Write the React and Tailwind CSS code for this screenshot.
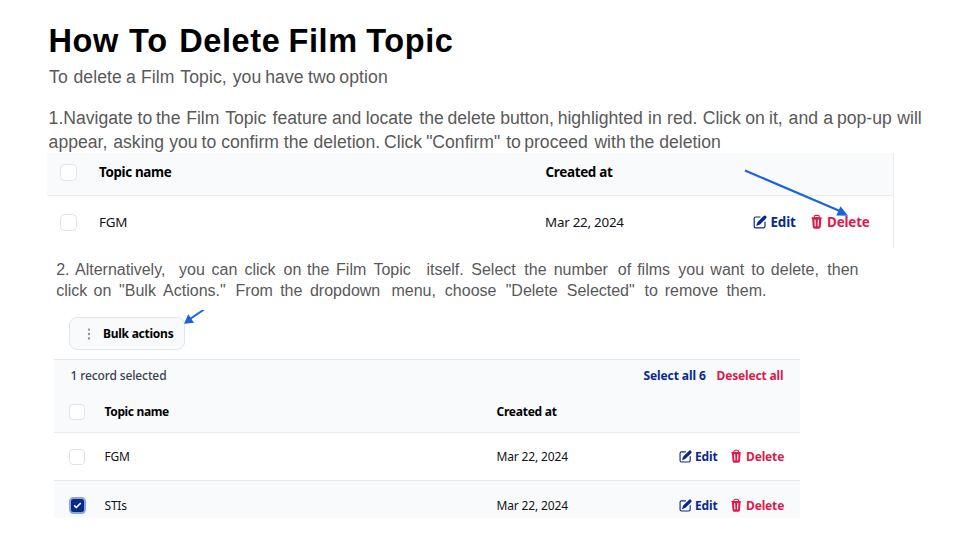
import { HiMiniPencilSquare, HiMiniTrash, HiMiniEllipsisVertical } from "react-icons/hi2";

const sans = "font-['Liberation_Sans',Arial,sans-serif]";
const ui = "font-['Noto_Sans',sans-serif]";

const title = [
  ["How", "w-[80.6px]"], ["To", "w-[50.1px]"], ["Delete", "w-[109.3px]"], ["Film", "w-[77.8px]"], ["Topic", ""],
];
const intro = [
  ["To", "w-[24.4px]"], ["delete", "w-[52.7px]"], ["a", "w-[14.9px]"], ["Film", "w-[39.3px]"], ["Topic,", "w-[52.4px]"],
  ["you", "w-[32.5px]"], ["have", "w-[42.8px]"], ["two", "w-[31.4px]"], ["option", ""],
];
const stepOne = [
  [
    ["1.Navigate", "w-[89px]"], ["to", "w-[18.4px]"], ["the", "w-[30.2px]"], ["Film", "w-[39px]"], ["Topic", "w-[47.4px]"],
    ["feature", "w-[59.4px]"], ["and", "w-[33.8px]"], ["locate", "w-[53.5px]"], ["the", "w-[28.3px]"], ["delete", "w-[52.6px]"],
    ["button,", "w-[57.5px]"], ["highlighted", "w-[90.4px]"], ["in", "w-[19px]"], ["red.", "w-[35.7px]"], ["Click", "w-[42.5px]"],
    ["on", "w-[23.8px]"], ["it,", "w-[19.6px]"], ["and", "w-[34.6px]"], ["a", "w-[13.8px]"], ["pop-up", "w-[60.3px]"], ["will", ""],
  ],
  [
    ["appear,", "w-[64.7px]"], ["asking", "w-[55.9px]"], ["you", "w-[32.4px]"], ["to", "w-[19.7px]"], ["confirm", "w-[62.6px]"],
    ["the", "w-[29.7px]"], ["deletion.", "w-[70.5px]"], ["Click", "w-[42.1px]"], ['"Confirm"', "w-[80px]"], ["to", "w-[18.1px]"],
    ["proceed", "w-[70.2px]"], ["with", "w-[35.4px]"], ["the", "w-[29.4px]"], ["deletion", ""],
  ],
];
const stepTwo = [
  [
    ["2.", "w-[18.8px]"], ["Alternatively,", "w-[104px]"], ["you", "w-[32.5px]"], ["can", "w-[33px]"], ["click", "w-[39px]"],
    ["on", "w-[23.6px]"], ["the", "w-[29px]"], ["Film", "w-[37.3px]"], ["Topic", "w-[53px]"], ["itself.", "w-[44.9px]"],
    ["Select", "w-[53.1px]"], ["the", "w-[29.3px]"], ["number", "w-[64.2px]"], ["of", "w-[19.3px]"], ["films", "w-[41.2px]"],
    ["you", "w-[32px]"], ["want", "w-[41px]"], ["to", "w-[19.5px]"], ["delete,", "w-[56.5px]"], ["then", ""],
  ],
  [
    ["click", "w-[37.4px]"], ["on", "w-[25.5px]"], ['"Bulk', "w-[44px]"], ['Actions."', "w-[72.5px]"], ["From", "w-[44.6px]"],
    ["the", "w-[29.8px]"], ["dropdown", "w-[81.5px]"], ["menu,", "w-[53.4px]"], ["choose", "w-[60.8px]"], ['"Delete', "w-[61.1px]"],
    ['Selected"', "w-[77.7px]"], ["to", "w-[20.3px]"], ["remove", "w-[61.7px]"], ["them.", ""],
  ],
];

function Line({ words }) {
  return (
    <span className="flex whitespace-nowrap">
      {words.map(([word, width], i) => (
        <span key={i} className={`shrink-0 ${width}`}>{word} </span>
      ))}
    </span>
  );
}

function Checkbox({ className }) {
  return <span className={`shrink-0 border border-[#e2e4e8] bg-white ${className}`} />;
}

function SmallRow({ name, checked, className }) {
  return (
    <div className={`flex items-center text-[12px] text-[#111318] ${className}`}>
      <div className="flex w-[50.5px] pl-[15px]">
        {checked ? (
          <span className="flex size-[17px] items-center justify-center rounded-[4.5px] border-2 border-[#8fa3d6] bg-[#08298c]">
            <svg viewBox="0 0 16 16" className="size-[13px]" fill="#fff">
              <path d="M12.207 4.793a1 1 0 0 1 0 1.414l-5 5a1 1 0 0 1-1.414 0l-2-2a1 1 0 0 1 1.414-1.414L6.5 9.086l4.293-4.293a1 1 0 0 1 1.414 0z" />
            </svg>
          </span>
        ) : (
          <Checkbox className="size-4 rounded-[4px]" />
        )}
      </div>
      <span className="w-[392px] tracking-[-0.2px]">{name}</span>
      <span className="w-[181.5px] tracking-[-0.15px]">Mar 22, 2024</span>
      <span className="flex w-[51px] items-center font-bold tracking-[-0.1px] text-[#08298c]">
        <HiMiniPencilSquare className="mr-[2px] size-[15px]" />Edit
      </span>
      <span className="flex items-center font-bold tracking-[-0.15px] text-[#d91c4b]">
        <HiMiniTrash className="mr-[2.5px] size-[14.5px]" />Delete
      </span>
    </div>
  );
}

export default function App() {
  return (
    <main className={`relative h-[540px] w-[960px] overflow-hidden bg-white pt-[21px] ${sans}`}>
      <h1 className="pl-[48.5px] text-[32.5px] leading-[40px] font-bold tracking-[0.6px] text-black"><Line words={title} /></h1>
      <p className="mt-1 pl-[49px] text-[17.6px] leading-6 tracking-[0.1px] text-[#595959]"><Line words={intro} /></p>
      <p className="mt-[17px] pl-[48.6px] text-[17.6px] leading-6 text-[#595959]">
        {stepOne.map((words, i) => <Line key={i} words={words} />)}
      </p>

      <section className={`-mt-px ml-[47px] h-[95px] w-[847px] border-r border-[#ececef] text-[13.4px] text-[#111318] ${ui}`}>
        <div className="flex h-[43px] items-center border-b-[1.5px] border-[#ebecef] bg-[#f9fafb] pb-1 font-bold text-black">
          <div className="flex w-[52px] pl-[13px]"><Checkbox className="size-[17px] rounded-[4.5px]" /></div>
          <span className="w-[446.5px] tracking-[-0.35px]">Topic name</span>
          <span className="tracking-[-0.3px]">Created at</span>
        </div>
        <div className="flex h-[52px] items-center">
          <div className="flex w-[52px] pl-[13px]"><Checkbox className="size-[17px] rounded-[4.5px]" /></div>
          <span className="w-[446px] tracking-[-0.2px]">FGM</span>
          <span className="w-[206.5px] tracking-[-0.25px]">Mar 22, 2024</span>
          <span className="flex w-[57px] items-center font-bold tracking-[-0.15px] text-[#08298c]">
            <HiMiniPencilSquare className="mr-[3px] size-[16px]" />Edit
          </span>
          <span className="flex items-center font-bold tracking-[-0.15px] text-[#d91c4b]">
            <HiMiniTrash className="mr-[3px] size-[15.5px]" />Delete
          </span>
        </div>
      </section>

      <p className="mt-[10.5px] pl-[56.2px] text-[16px] leading-[21px] text-[#595959]">
        {stepTwo.map((words, i) => <Line key={i} words={words} />)}
      </p>

      <section className={`mt-[9.5px] ml-[54px] h-[207.5px] w-[746px] overflow-hidden text-[12px] ${ui}`}>
        <div className="h-[48.5px] pt-[7px] pl-[15px]">
          <button className="flex h-[33px] w-[116px] items-center rounded-[8px] border border-[#e3e5e9] bg-[#f9fafb] pl-[11px] font-bold tracking-[-0.25px] text-black">
            <HiMiniEllipsisVertical className="mr-[6px] size-4 text-[#8b9099]" />Bulk actions
          </button>
        </div>
        <div className="flex h-[34px] items-center border-t border-[#e4e6ea] bg-[#f9fafb] pl-[16.5px] font-medium">
          <span className="w-[573px] tracking-[-0.12px] text-[#374151]">1 record selected</span>
          <span className="w-[73px] font-bold tracking-[-0.1px] text-[#08298c]">Select all 6</span>
          <span className="font-bold tracking-[-0.15px] text-[#d91c4b]">Deselect all</span>
        </div>
        <div className="flex h-[40px] items-center border-b-[1.5px] border-[#ebecef] bg-[#f9fafb] pb-px font-bold text-black">
          <div className="flex w-[50.5px] pl-[15px]"><Checkbox className="size-4 rounded-[4px]" /></div>
          <span className="w-[392px] tracking-[-0.35px]">Topic name</span>
          <span className="tracking-[-0.25px]">Created at</span>
        </div>
        <SmallRow name="FGM" className="h-[48px] border-b border-[#e4e6ea] pt-px" />
        <SmallRow name="STIs" checked className="h-[50px] bg-[#f9fafb]" />
      </section>

      <svg className="pointer-events-none absolute inset-0" width="960" height="540" fill="none">
        <path d="M745 170.5 841 211.5" stroke="#1b62e0" strokeWidth="2.1" />
        <path d="M848 215.8 836.3 215.6 840.5 206.2Z" fill="#1b62e0" />
        <path d="M204 309.5 190 319" stroke="#1b62e0" strokeWidth="2.1" />
        <path d="M184 323.7 188.3 314.3 194 322.7Z" fill="#1b62e0" />
        <rect x="195" y="306" width="16" height="4" fill="#fff" />
      </svg>
    </main>
  );
}
